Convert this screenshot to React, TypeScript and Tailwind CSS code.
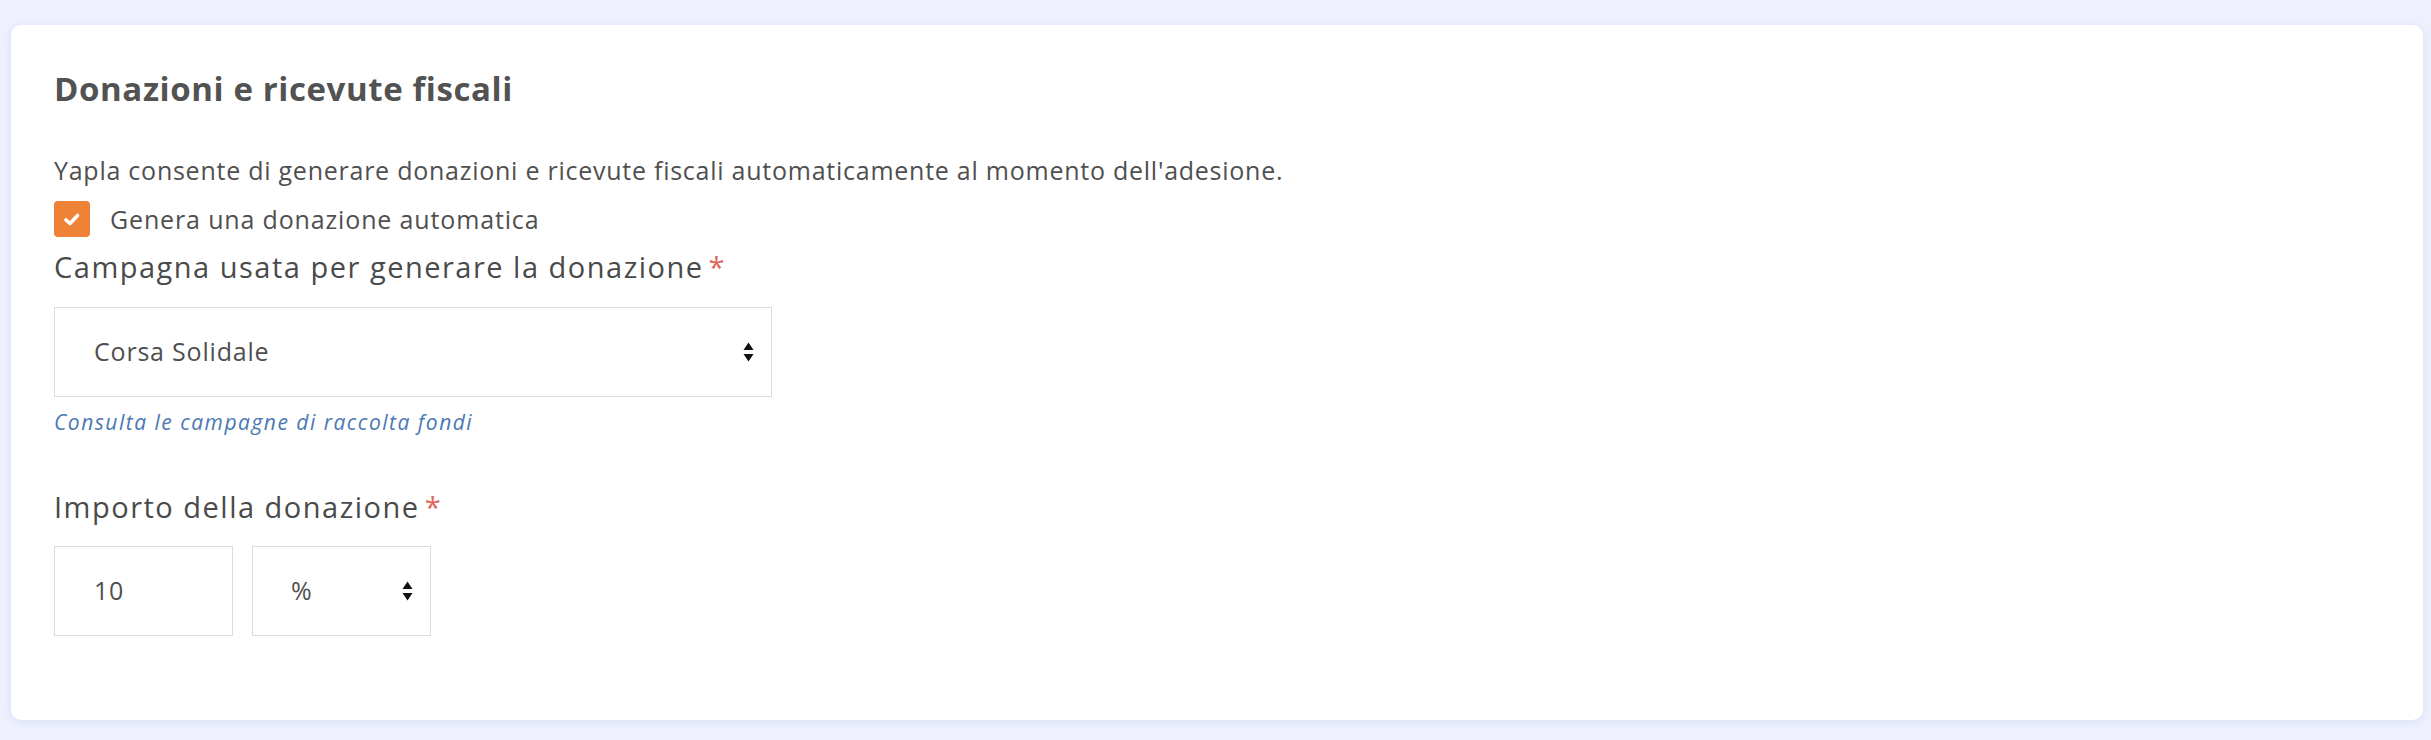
import React from "react";

const font = { fontFamily: '"Open Sans", "Liberation Sans", sans-serif' };

const SelectArrows = () => (
  <svg width="11" height="22" viewBox="0 0 11 22" className="shrink-0">
    <path d="M5.5 1.5 L10.5 9 L0.5 9 Z" fill="#111" />
    <path d="M0.5 13 L10.5 13 L5.5 20.5 Z" fill="#111" />
  </svg>
);

const Label = ({ children }: { children: React.ReactNode }) => (
  <div className="text-[29px] leading-[36px] font-medium tracking-[1.5px] text-[#4a4a4a]">
    {children}
    <span className="ml-[5px] text-[#e0645a]">*</span>
  </div>
);

export default function App() {
  return (
    <div className="min-h-screen bg-[#eef1fd] pl-[11px] pr-[8px] pt-[25px]" style={font}>
      <div className="h-[695px] rounded-[10px] bg-white px-[43px] pt-[44px] shadow-[0_2px_10px_rgba(120,140,220,0.18)]">
        {/* Title */}
        <h2 className="text-[33px] leading-[40px] font-bold tracking-[0.6px] text-[#525252]">
          Donazioni e ricevute fiscali
        </h2>

        <p className="mt-[43px] text-[25px] leading-[36px] tracking-[0.75px] text-[#4f4f4f]">
          Yapla consente di generare donazioni e ricevute fiscali automaticamente al momento dell'adesione.
        </p>

        {/* Checkbox */}
        <label className="mt-[13px] flex items-center gap-[20px]">
          <span className="flex h-[36px] w-[36px] items-center justify-center rounded-[4px] bg-[#ee8236]">
            <svg width="18" height="15" viewBox="0 0 18 15">
              <path d="M3 8 L7 11.5 L14.5 3.5" fill="none" stroke="#fff" strokeWidth="3.6" strokeLinecap="round" strokeLinejoin="round" />
            </svg>
          </span>
          <span className="text-[25px] leading-[36px] tracking-[0.85px] text-[#4f4f4f]">Genera una donazione automatica</span>
        </label>

        {/* Campaign */}
        <div className="mt-[12px]">
          <Label>Campagna usata per generare la donazione</Label>
        </div>
        <div className="mt-[22px] flex h-[90px] w-[718px] items-center justify-between border border-[#d9dde2] pl-[39px] pr-[17px]">
          <span className="text-[25px] tracking-[0.8px] text-[#4f4f4f]">Corsa Solidale</span>
          <SelectArrows />
        </div>
        <a className="mt-[11px] block text-[21px] leading-[28px] italic tracking-[1.5px] text-[#4a78b3]">
          Consulta le campagne di raccolta fondi
        </a>

        {/* Amount */}
        <div className="mt-[53px]">
          <Label>Importo della donazione</Label>
        </div>
        <div className="mt-[21px] flex gap-[19px]">
          <div className="flex h-[90px] w-[179px] items-center border border-[#d9dde2] pl-[39px]">
            <span className="text-[25px] tracking-[0.8px] text-[#4f4f4f]">10</span>
          </div>
          <div className="flex h-[90px] w-[179px] items-center justify-between border border-[#d9dde2] pl-[38px] pr-[17px]">
            <span className="text-[25px] text-[#4f4f4f]">%</span>
            <SelectArrows />
          </div>
        </div>
      </div>
    </div>
  );
}
